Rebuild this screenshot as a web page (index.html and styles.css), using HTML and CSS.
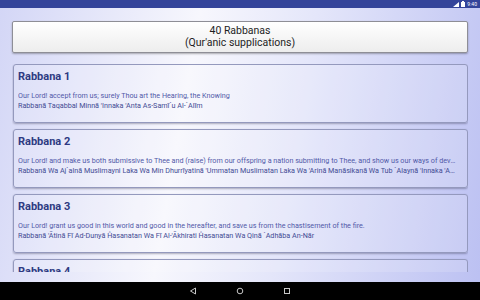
FILE: index.html
```html
<!DOCTYPE html>
<html lang="en">
<head>
    <meta charset="UTF-8">
    <meta name="viewport" content="width=device-width, initial-scale=1.0">
    <title>40 Rabbanas</title>
    <link rel="stylesheet" href="styles.css">
</head>
<body>

    <!-- Barra de estado -->
    <div class="status-bar">
        <svg class="signal" width="6" height="5" viewBox="0 0 6 5"><path d="M0 5 L6 0 L6 5 Z" fill="#fff"/></svg>
        <svg class="battery" width="4" height="6" viewBox="0 0 4 6"><rect x="1" y="0" width="2" height="1" fill="#fff"/><rect x="0" y="1" width="4" height="5" fill="#fff"/></svg>
        <span class="clock">9:40</span>
    </div>

    <div class="main">
        <div class="header">
            <div>40 Rabbanas</div>
            <div>(Qur'anic supplications)</div>
        </div>

        <div class="list">
            <div class="card">
                <div class="card-title">Rabbana 1</div>
                <div class="card-text">Our Lord! accept from us; surely Thou art the Hearing, the Knowing</div>
                <div class="card-translit">Rabbanā Taqabbal Minnā 'Innaka 'Anta As-Samī`u Al-`Alīm</div>
            </div>
            <div class="card">
                <div class="card-title">Rabbana 2</div>
                <div class="card-text">Our Lord! and make us both submissive to Thee and (raise) from our offspring a nation submitting to Thee, and show us our ways of devotion and turn to us (mercifully)</div>
                <div class="card-translit">Rabbanā Wa Aj`alnā Muslimayni Laka Wa Min Dhurrīyatinā 'Ummatan Muslimatan Laka Wa 'Arinā Manāsikanā Wa Tub `Alaynā 'Innaka 'Anta At-Tawwābu Ar-Raĥīm</div>
            </div>
            <div class="card">
                <div class="card-title">Rabbana 3</div>
                <div class="card-text">Our Lord! grant us good in this world and good in the hereafter, and save us from the chastisement of the fire.</div>
                <div class="card-translit">Rabbanā 'Ātinā Fī Ad-Dunyā Ĥasanatan Wa Fī Al-'Ākhirati Ĥasanatan Wa Qinā `Adhāba An-Nār</div>
            </div>
            <div class="card">
                <div class="card-title">Rabbana 4</div>
                <div class="card-text">Our Lord! pour down upon us patience, and make our steps firm</div>
                <div class="card-translit">Rabbanā 'Afrigh `Alaynā Şabrāan Wa Thabbit 'Aqdāmanā</div>
            </div>
        </div>
    </div>

    <!-- Barra de navegacion -->
    <div class="nav-bar">
        <svg width="8" height="8" viewBox="0 0 8 8"><path d="M6.5 1 L1.5 4 L6.5 7 Z" fill="none" stroke="#c8c8c8" stroke-width="1"/></svg>
        <svg width="8" height="8" viewBox="0 0 8 8"><circle cx="4" cy="4" r="2.8" fill="none" stroke="#c8c8c8" stroke-width="1"/></svg>
        <svg width="8" height="8" viewBox="0 0 8 8"><rect x="1.5" y="1.5" width="5" height="5" fill="none" stroke="#c8c8c8" stroke-width="1"/></svg>
    </div>

</body>
</html>
```

FILE: styles.css
```css
body {
    font-family: Roboto, 'Liberation Sans', sans-serif;
    margin: 0;
    padding: 0;
    width: 480px;
    height: 300px;
    overflow: hidden;
    display: flex;
    flex-direction: column;
    background: linear-gradient(100deg, #d3d6f6 0%, #f7f7fd 38%, #e4e6fa 60%, #bbc0f2 100%);
}

/* Barra de estado */
.status-bar {
    height: 8px;
    background-color: #34449a;
    display: flex;
    justify-content: flex-end;
    align-items: center;
    gap: 2px;
    padding-right: 3px;
}

.clock {
    color: #fff;
    font-size: 5px;
    line-height: 8px;
}

.main {
    flex: 1;
    display: flex;
    flex-direction: column;
    padding: 13px 12px 10px 12px;
    min-height: 0;
}

.header {
    height: 32px;
    box-sizing: border-box;
    border: 1px solid #8e8e96;
    border-radius: 2px;
    background: linear-gradient(#ffffff, #ededed);
    box-shadow: 0 1px 2px rgba(0, 0, 0, 0.3);
    display: flex;
    flex-direction: column;
    justify-content: center;
    align-items: center;
    font-size: 10.5px;
    line-height: 12px;
    color: #1e1e1e;
}

.list {
    flex: 1;
    margin-top: 11px;
    overflow: hidden;
    display: flex;
    flex-direction: column;
    gap: 6px;
    padding: 0 0 0 1px;
}

.card {
    flex-shrink: 0;
    height: 59px;
    box-sizing: border-box;
    border: 1px solid #9499bd;
    border-radius: 3px;
    background: rgba(255, 255, 255, 0.15);
    box-shadow: 0 1px 2px rgba(40, 40, 70, 0.35);
    padding: 5px 10px 0 4px;
    overflow: hidden;
}

.card-title {
    font-size: 11px;
    font-weight: bold;
    line-height: 14px;
    color: #2e3a82;
}

.card-text, .card-translit {
    font-size: 7.2px;
    line-height: 10.5px;
    white-space: nowrap;
    overflow: hidden;
    text-overflow: ellipsis;
}

.card-text {
    margin-top: 6.5px;
    color: #5159a8;
}

.card-translit {
    color: #434b94;
}

/* Barra de navegacion */
.nav-bar {
    height: 18px;
    background-color: #000;
    display: flex;
    justify-content: center;
    align-items: center;
    gap: 39px;
}
```
